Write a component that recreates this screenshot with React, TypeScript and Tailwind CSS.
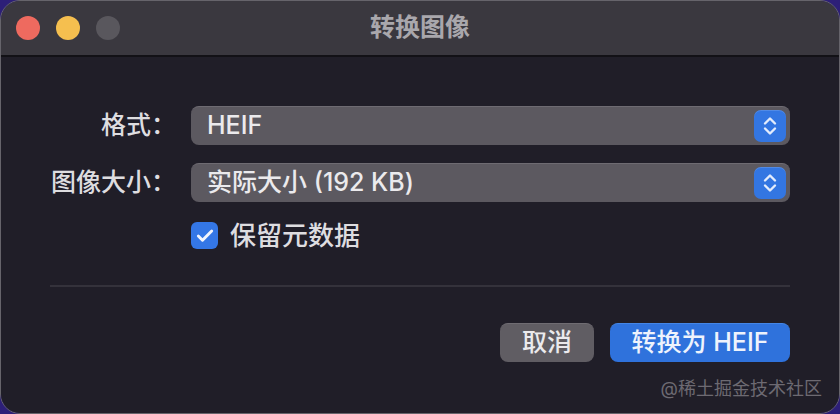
import { Check } from 'lucide-react';

function Stepper() {
  return (
    <div className="w-[32px] h-[32px] rounded-[7px] bg-[#3376e2] flex items-center justify-center shadow-[inset_0_1px_0_rgba(255,255,255,0.15)]">
      <svg width="18" height="24" viewBox="0 0 18 24" fill="none" stroke="#e3ecfc" strokeWidth="2.4" strokeLinecap="round" strokeLinejoin="round">
        <path d="M4 9.5 9 4.5 14 9.5" />
        <path d="M4 14.5 9 19.5 14 14.5" />
      </svg>
    </div>
  );
}

function Select({ value }: { value: string }) {
  return (
    <div className="h-[39px] rounded-[8px] bg-[#5c5960] border-t border-[#6e6b72] flex items-center justify-between pl-[16px] pr-[4px]">
      <span className="text-[25px] font-medium text-[#ebeaed]">{value}</span>
      <Stepper />
    </div>
  );
}

export default function App() {
  return (
    <div
      className="w-[840px] h-[414px] bg-[#2d1f78]"
      style={{ fontFamily: 'Inter, "Noto Sans CJK SC", sans-serif' }}
    >
      <div className="h-full rounded-[20px] border border-[#66646b] overflow-hidden flex flex-col">
        <div className="h-[56px] bg-[#3a383f] border-b-2 border-[#121116] grid grid-cols-[1fr_auto_1fr] items-center">
          <div className="flex items-center gap-[16px] pl-[15px]">
            <span className="w-[24px] h-[24px] rounded-full bg-[#ee6a5f]" />
            <span className="w-[24px] h-[24px] rounded-full bg-[#f5bf4f]" />
            <span className="w-[24px] h-[24px] rounded-full bg-[#59575d]" />
          </div>
          <h1 className="text-[25px] font-bold text-[#a9a7ac]">转换图像</h1>
          <div />
        </div>

        <div className="flex-1 bg-[#201e28] pt-[49px] px-[49px] flex flex-col">
          <div className="grid grid-cols-[126px_1fr] gap-x-[15px] gap-y-[18px] items-center">
            <label className="text-right text-[25px] font-medium text-[#dedde0]">格式：</label>
            <Select value="HEIF" />
            <label className="text-right text-[25px] font-medium text-[#dedde0]">图像大小：</label>
            <Select value="实际大小 (192 KB)" />
            <div />
            <div className="flex items-center gap-[12px] -mt-[4px]">
              <span className="w-[27px] h-[27px] rounded-[6px] bg-[#3477e6] flex items-center justify-center">
                <Check className="w-[20px] h-[20px] text-[#f1f5fd]" strokeWidth={3.5} />
              </span>
              <span className="text-[26px] font-medium text-[#dedde0]">保留元数据</span>
            </div>
          </div>

          <div className="h-[2px] bg-[#34323b] mt-[30px]" />

          <div className="flex justify-end gap-[16px] mt-[36px]">
            <button className="w-[94px] h-[39px] rounded-[8px] bg-[#605d63] border-t border-[#6f6c72] text-[25px] font-medium text-[#ebeaed]">
              取消
            </button>
            <button className="w-[180px] h-[39px] rounded-[8px] bg-[#2f72dc] border-t border-[#4486e6] text-[25px] font-medium text-[#eef3fc]">
              转换为 HEIF
            </button>
          </div>

          <div className="flex justify-end -mr-[32px] mt-[13px]">
            <span className="text-[18px] text-[#6d6a72]">@稀土掘金技术社区</span>
          </div>
        </div>
      </div>
    </div>
  );
}
